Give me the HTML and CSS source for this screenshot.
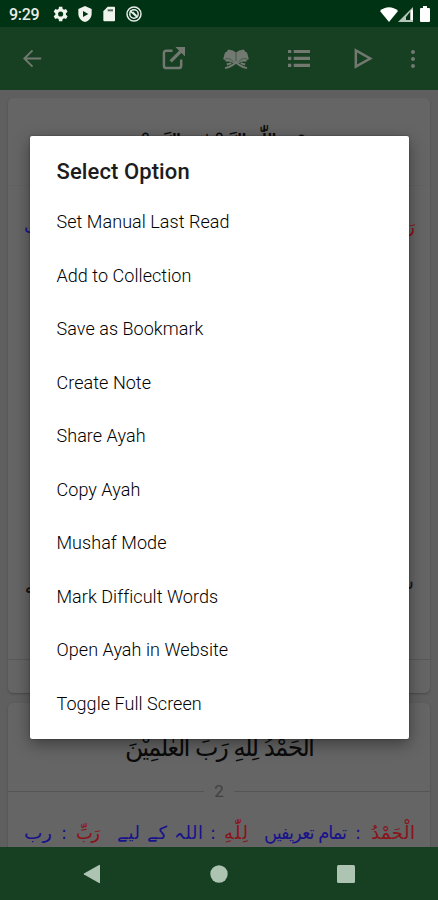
FILE: index.html
```html
<!DOCTYPE html>
<html lang="en">
<head>
<meta charset="utf-8">
<title>Select Option</title>
<link rel="stylesheet" href="styles.css">
</head>
<body>
<div class="phone">
  <header class="status">
    <span class="clock">9:29</span>
    <svg class="st-icon gear" viewBox="2.500 2 19 20"><path fill-rule="evenodd" d="M19.400 13a7.500 7.500 0 0 0 0-2l2.100-1.700-2-3.500-2.500 1a7.500 7.500 0 0 0-1.700-1L14.900 3h-4.200l-.4 2.800a7.500 7.500 0 0 0-1.700 1l-2.500-1-2 3.500L6.200 11a7.500 7.500 0 0 0 0 2l-2.100 1.700 2 3.500 2.500-1a7.500 7.500 0 0 0 1.700 1l.4 2.800h4.200l.4-2.800a7.500 7.500 0 0 0 1.700-1l2.500 1 2-3.500zM12.800 8.800a3.200 3.200 0 1 1 0 6.400 3.200 3.200 0 0 1 0-6.400z"/></svg>
    <svg class="st-icon shield" viewBox="0 0 24 24"><path fill-rule="evenodd" d="M12 0 2 4.500v7C2 17 6.200 22.500 12 24c5.800-1.500 10-7 10-12.500v-7zM9 7.500 17 12l-8 4.500z"/></svg>
    <svg class="st-icon card-ic" viewBox="0 0 24 24"><path d="M20 1H10L3.500 8v13.500q0 1.500 1.500 1.500h14.500q1.500 0 1.500-1.500V2.500Q21 1 20 1z"/><path class="notch" d="M10 5h8v3h-8z"/></svg>
    <svg class="st-icon ring" viewBox="0 0 24 24"><g fill="none" stroke="#e8eee9" stroke-width="2.200"><circle cx="12" cy="12" r="10.500"/><circle cx="12" cy="12" r="6.300"/><path d="M6 7 17 17M10 9l6 6"/></g></svg>
    <span class="grow"></span>
    <svg class="wifi" viewBox="0 0 18 15"><path d="M0 4C5-1 13-1 18 4L9 15z"/></svg>
    <svg class="signal" viewBox="0 0 15 15"><path fill="#b7c4ba" d="M15 0v15H0z"/><path fill="#003214" d="M8 10l4-5v8H8z"/><path d="M13 3h2v10h-2z"/></svg>
    <svg class="battery" viewBox="0 0 10 16"><path d="M3 0h4v2h2q1 0 1 1v12q0 1-1 1H1q-1 0-1-1V3q0-1 1-1h2z"/></svg>
  </header>
  <nav class="bar">
    <svg class="back" viewBox="0 0 24 24"><path class="line" d="M21 12H4M12 3.500 3.500 12l8.500 8.500"/></svg>
    <span class="grow"></span>
    <svg class="share" viewBox="0 0 24 24"><path class="line thick" d="M11 4H4.500q-2.500 0-2.500 2.500v13q0 2.500 2.500 2.500h13q2.500 0 2.500-2.500V13"/><path class="line arrow" d="M9 15 20 4"/><path d="M14 0h10v10z"/></svg>
    <svg class="book" viewBox="0 0 28 24"><path d="M14 5Q10 1 5 2L4 4 2 5 0 12l2 1 1 2q6-1 8 2l3-2 3 2q2-3 8-2l1-2 2-1-2-7-2-1-1-2q-5-1-9 3z"/><path class="line" d="M2 22q9-2 14-8.500M26 22q-9-2-14-8.500M4 18l5-1.500M24 18l-5-1.500"/><path class="crease" d="M14 5v9.500M2 12q5-2 9 3M26 12q-5-2-9 3"/></svg>
    <svg class="list" viewBox="0 0 24 24"><path d="M1 3h3.500v3.300H1zm6 0h17v3.300H7zM1 10.300h3.500v3.300H1zm6 0h17v3.300H7zM1 17.500h3.500v3.300H1zm6 0h17v3.300H7z"/></svg>
    <svg class="play" viewBox="0 0 24 24"><path class="line thick" d="M4 3.500v17L19 12z"/></svg>
    <svg class="more" viewBox="0 0 6 24"><circle cx="3" cy="5" r="2"/><circle cx="3" cy="12" r="2"/><circle cx="3" cy="19" r="2"/></svg>
  </nav>
  <main class="content">
    <section class="ayah first">
      <svg class="verse" viewBox="0 0 422 72"><text x="312" y="54" textLength="192">بِسْمِ اللّٰهِ الرَّحْمٰنِ الرَّحِيْمِ</text></svg>
      <div class="rule"></div>
      <svg class="gloss" viewBox="0 0 422 60"><text class="red" x="407" y="47" textLength="24">رَبِّ</text><text class="blue" x="44" y="47" textLength="28">رب</text></svg>
      <svg class="note" viewBox="0 0 422 60"><text x="406" y="42" textLength="389">شروع کرتا ہوں اللہ کے نام سے جو بڑا مہربان ہے</text></svg>
      <div class="rule foot"></div>
    </section>
    <section class="ayah second">
      <svg class="verse" viewBox="0 0 422 72"><text x="307" y="53" textLength="190">اَلْحَمْدُ لِلّٰهِ رَبِّ الْعٰلَمِيْنَ</text></svg>
      <div class="number"><i></i><span>2</span><i></i></div>
      <svg class="gloss" viewBox="0 0 422 40">
        <text class="red" x="407" y="32" textLength="44">الْحَمْدُ</text><text class="blue" x="353" y="32">:</text>
        <text class="blue" x="339" y="32" textLength="83">تمام تعریفیں</text>
        <text class="red" x="240" y="32" textLength="24">لِلّٰهِ</text><text class="blue" x="208" y="32">:</text>
        <text class="blue" x="195" y="32" textLength="86">اللہ کے لیے</text>
        <text class="red" x="92" y="32" textLength="24">رَبِّ</text><text class="blue" x="59" y="32">:</text>
        <text class="blue" x="44" y="32" textLength="28" lengthAdjust="spacingAndGlyphs">رب</text>
      </svg>
    </section>
  </main>
  <footer class="nav">
    <svg viewBox="0 0 18 20"><path d="M16 1q1-.5 1 .8v16.400q0 1.300-1 .8L1 10.500q-.8-.5 0-1z"/></svg>
    <svg viewBox="0 0 18 20"><circle cx="9" cy="10" r="8.700"/></svg>
    <svg viewBox="0 0 18 20"><rect x="0" y="1" width="18" height="18" rx="1.500"/></svg>
  </footer>
  <div class="dialog" role="dialog">
    <h1>Select Option</h1>
    <ul>
      <li>Set Manual Last Read</li>
      <li>Add to Collection</li>
      <li>Save as Bookmark</li>
      <li>Create Note</li>
      <li>Share Ayah</li>
      <li>Copy Ayah</li>
      <li>Mushaf Mode</li>
      <li>Mark Difficult Words</li>
      <li>Open Ayah in Website</li>
      <li>Toggle Full Screen</li>
    </ul>
  </div>
</div>
</body>
</html>
```
FILE: styles.css
```css
* { box-sizing: border-box; }
body { margin: 0; font-family: Roboto, "Liberation Sans", sans-serif; }
.phone { position: relative; width: 438px; height: 900px; display: flex; flex-direction: column; overflow: hidden; background: #5f5f5f; }
.grow { flex: 1; }
svg { display: block; flex: none; }

.status { height: 27px; flex: none; display: flex; align-items: center; padding: 1px 8px 0 9px; background: #003214; }
.status svg { fill: #fff; }
.clock { width: 43px; color: #e8eee9; font-size: 16px; font-weight: 500; letter-spacing: -0.3px; }
.status svg.st-icon { width: 16px; height: 16px; margin-right: 8.700px; fill: #f1f4ec; }
.status .notch { fill: #52705c; }
.wifi { width: 18px; height: 15px; }
.signal { width: 15px; height: 15px; margin: 0 7px 0 0; }
.battery { width: 10px; height: 16px; }

.bar { height: 63px; flex: none; display: flex; align-items: center; padding: 0 20px 0 21px; background: #173f22; }
.bar svg { width: 23px; height: 23px; fill: #717971; }
.bar .share { margin-right: 38px; }
.bar svg.book { width: 26px; height: 22px; margin-right: 38px; }
.bar .list { margin-right: 41px; }
.bar .play { margin-right: 35px; }
.bar svg.more { width: 6px; height: 24px; margin-right: 2px; }
.bar .share, .bar .book, .bar .list { position: relative; left: -1px; }
.line { fill: none; stroke: #717971; stroke-width: 2; }
.thick { stroke-width: 2.600; }
.arrow { stroke-width: 3.400; }
.crease { fill: none; stroke: #3c5943; stroke-width: 1; }

.content { flex: 1; min-height: 0; padding: 8px 8px 0; display: flex; flex-direction: column; gap: 10px; overflow: hidden; }
.ayah { flex: none; display: flex; flex-direction: column; background: #656565; border-radius: 5px; box-shadow: 0 1px 2px #494949; }
.first { height: 595px; }
.second { height: 144px; border-radius: 5px 5px 0 0; }
.ayah svg { width: 422px; overflow: visible; }
.ayah text { direction: rtl; font-family: "DejaVu Sans", sans-serif; }
.verse { height: 72px; font-size: 25px; fill: #0b0b0b; }
.gloss { height: 60px; font-size: 18px; }
.second .gloss { height: 40px; }
.note { height: 60px; margin-top: 301px; font-size: 19px; fill: #151515; }
.red { fill: #8b1118; }
.blue { fill: #17128a; }
.rule { height: 1px; background: #626262; margin-top: 15px; }
.foot { margin-top: 52px; background: #595959; }
.number { display: flex; align-items: center; gap: 10px; height: 32px; font-size: 17px; color: #414141; }
.number i { flex: 1; height: 1px; background: #555; }

.nav { height: 53px; flex: none; display: flex; justify-content: center; align-items: center; gap: 109px; background: #173f22; }
.nav svg { width: 18px; height: 20px; fill: #adc4b3; }

.dialog { position: absolute; left: 30px; top: 136px; width: 379px; height: 603px; background: #fff; border-radius: 2px; box-shadow: 0 5px 16px rgba(0,0,0,.4), 0 0 2px rgba(0,0,0,.4); padding: 20px 26.500px; }
h1 { margin: 0; font-size: 22px; font-weight: 500; letter-spacing: 0.1px; line-height: 32px; color: #1c1c1c; }
ul { margin: 7px 0 0; padding: 0; list-style: none; }
li { height: 53.500px; line-height: 53.500px; font-size: 18px; font-weight: 300; letter-spacing: 0.05px; color: #000; }
```
